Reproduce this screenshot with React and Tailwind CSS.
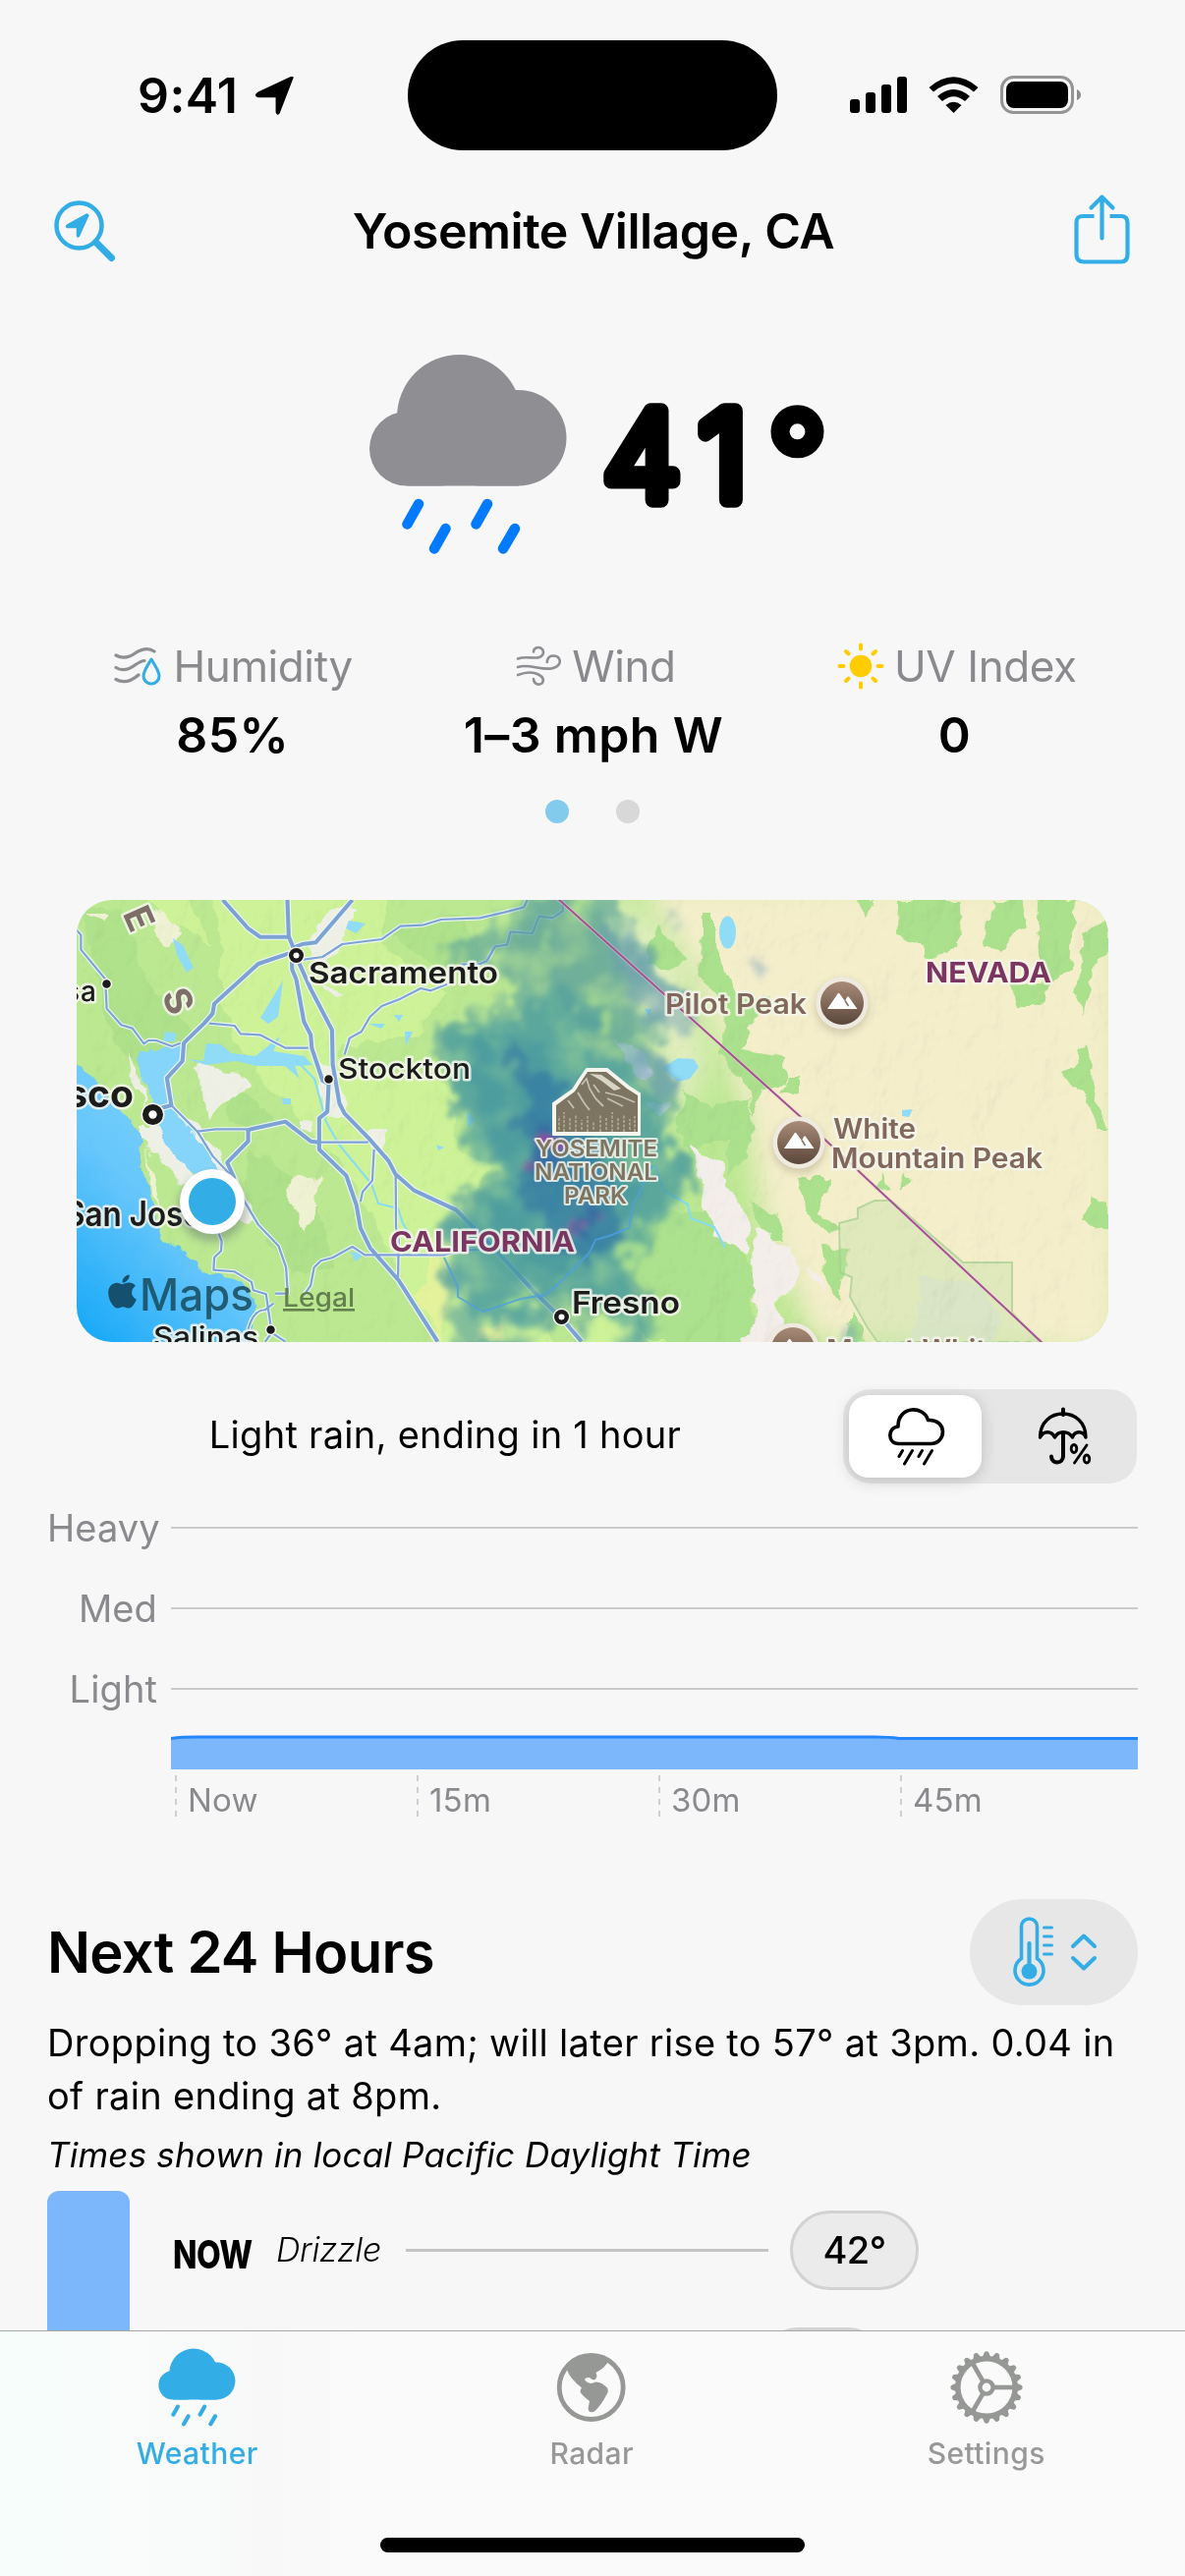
import React from "react";
import { FaApple } from "react-icons/fa";

const BLUE = "#32ade6";

/* ---------- Status bar ---------- */

function StatusBar() {
  return (
    <div className="h-[168px] pt-[41px] flex items-start shrink-0">
      <div className="w-[415px] h-[112px] flex items-center pl-[140px]">
        <span className="text-[50px] leading-[60px] font-semibold tracking-[0.4px]">9:41</span>
        <svg className="ml-[17px] mt-[1px]" width="42" height="40" viewBox="0 0 42 40">
          <path d="M38.5 2 L25 37 Q23.6 39.5 22.3 36 V20.5 H4 Q-.5 19.5 3.5 16.5 L36 1.2 Q40 -.5 38.5 2Z" fill="#000" stroke="#000" strokeWidth="1.5" strokeLinejoin="round" />
        </svg>
      </div>
      <div className="w-[376px] h-[112px] rounded-full bg-black" />
      <div className="h-[112px] pl-[74px] flex items-center">
        <svg width="236" height="40" viewBox="865 78 236 40">
          <rect x="865" y="102" width="10" height="14" rx="3" />
          <rect x="881" y="95" width="10" height="21" rx="3" />
          <rect x="897" y="87" width="10" height="29" rx="3" />
          <rect x="913" y="79" width="10" height="37" rx="3" />
          <path d="M945.5 90 L950 94.5 Q970.5 77.5 991 94.5 L995.5 90 Q970.5 68.500 945.500 90Z" />
          <path d="M954 99 L959 104 Q970.500 94.500 982 104 L987 99 Q970.500 85 954 99Z" />
          <path d="M962.500 108 L970.500 116 L978.500 108 Q970.500 101.500 962.500 108Z" />
          <rect x="1019.500" y="79.500" width="72" height="36" rx="12" fill="none" stroke="#959595" strokeWidth="3" />
          <rect x="1024" y="84" width="63" height="27" rx="8" />
          <path d="M1096 92 Q1100 94 1100 97.500 Q1100 101 1096 103Z" fill="#8b8b8b" />
        </svg>
      </div>
    </div>
  );
}

function TitleBar() {
  return (
    <div className="h-[130px] px-[54px] flex justify-between shrink-0">
      <svg className="mt-[35px]" width="65" height="66" viewBox="0 0 65 66" fill="none" stroke={BLUE}>
        <circle cx="26.500" cy="26.500" r="23" strokeWidth="4.500" />
        <path d="M43.500 43.500 L59.500 59.500" strokeWidth="7" strokeLinecap="round" />
        <path d="M36 16 L26.500 37 Q25 39 24.500 37 V28.500 H14.500 Q12.500 27.500 14.500 26 L34.500 15Z" fill={BLUE} strokeWidth="1.500" strokeLinejoin="round" />
      </svg>
      <h1 className="mt-[37px] -ml-[3px] text-[50px] leading-[60px] font-semibold tracking-[-0.5px] whitespace-nowrap">Yosemite Village, CA</h1>
      <svg className="mt-[29px]" width="60" height="74" viewBox="0 0 60 74" fill="none" stroke={BLUE} strokeWidth="4.200">
        <path d="M21.500 23 H10 Q3.500 23 3.500 29.500 V62 Q3.500 69.500 11 69.500 H49 Q55.500 69.500 55.500 62 V30 Q55.500 23 49 23 H37.500" />
        <path d="M29.500 45.500 V4 M18.500 14.500 L29.500 3.500 L40.500 14.500" strokeLinecap="round" strokeLinejoin="round" />
      </svg>
    </div>
  );
}

/* ---------- Current conditions ---------- */

function RainCloud({ width, height, cloud, rain }) {
  return (
    <svg width={width} height={height} viewBox="375 360 203 205">
      <g fill={cloud}>
        <circle cx="467.500" cy="424.500" r="63.500" />
        <rect x="376" y="419" width="110" height="75.500" rx="37.700" />
        <rect x="440" y="397" width="136.500" height="97.500" rx="48.700" />
        <rect x="414" y="450" width="114" height="44.500" />
      </g>
      <path d="M426 513 L414.500 533.500 M453.500 538 L442 558.500 M496 513 L484.500 533.500 M524 538 L512 558.500" stroke={rain} strokeWidth="10.500" strokeLinecap="round" />
    </svg>
  );
}

function Current() {
  return (
    <div className="h-[352px] pt-[62px] pl-[375px] flex items-start shrink-0">
      <RainCloud width={203} height={205} cloud="#8e8e93" rain="#007aff" />
      <svg className="ml-[28px] mt-[40px]" width="250" height="130" viewBox="606 400 250 130">
        <g stroke="#000" strokeLinejoin="round" fontFamily="Inter, sans-serif">
          <text x="614 711" y="508.500" fontSize="125" fontWeight="300" strokeWidth="15.500">41</text>
          <text x="781" y="516" fontSize="134" fontWeight="300" strokeWidth="11.500">°</text>
        </g>
      </svg>
    </div>
  );
}

function HumidityIcon() {
  return (
    <svg width="48" height="40" viewBox="0 0 48 40" fill="none" stroke="#8e8e93" strokeWidth="3.200" strokeLinecap="round">
      <path d="M2 9 C9 13 16 11 22 6.500 C30 1.500 36 1.500 41 5" />
      <path d="M2 21.500 C9 26 16 23 22 18.500 C25 16.500 28 14.500 31 14.500" />
      <path d="M2 33.500 C10 38 18 35 25 29" />
      <path d="M38 13 C34 20 30 25 30 30 A8 8 0 0 0 46 30 C46 25 42 20 38 13Z" stroke={BLUE} strokeWidth="3" strokeLinejoin="round" />
    </svg>
  );
}

function WindIcon() {
  return (
    <svg width="47" height="42" viewBox="0 0 47 42" fill="none" stroke="#8e8e93" strokeWidth="2.600" strokeLinecap="round">
      <path d="M2 13.500 C8 11 15 13 22 12.500 C28 11.500 29 7 27 4 C24 .500 18 2 18 6.500" />
      <path d="M2 22 C12 18 24 25 36 23.500 C44 22 46 17 44 13.500 C42 9.500 34 9.500 32.500 14 C32 15 31.800 16 31.800 17" />
      <path d="M2 30 C10 27 18 27 23 29.500 C28 32 29 36 26.500 38.500 C23 41 18 39 18 34" />
    </svg>
  );
}

function SunIcon() {
  return (
    <svg width="48" height="48" viewBox="0 0 48 48">
      <circle cx="24" cy="24" r="11.300" fill="#ffcc00" />
      <g stroke="#ffcc00" strokeWidth="4" strokeLinecap="round">
        <path d="M24 2.500 V6.500 M24 41.500 V45.500 M2.500 24 H6.500 M41.500 24 H45.500 M9 9 L11.500 11.500 M36.500 36.500 L39 39 M9 39 L11.500 36.500 M36.500 11.500 L39 9" />
      </g>
    </svg>
  );
}

const METRICS = [
  { label: "Humidity", value: "85%", Icon: HumidityIcon, gap: "gap-[13px] pl-[1px]" },
  { label: "Wind", value: "1–3 mph W", Icon: WindIcon, gap: "gap-[10px] pl-[5px]" },
  { label: "UV Index", value: "0", Icon: SunIcon, gap: "gap-[10px] pl-[5px]" },
];

function Metrics() {
  return (
    <div className="h-[266px] shrink-0 flex flex-col">
      <div className="grid grid-cols-3 pl-[53px] pr-[51px]">
        {METRICS.map(({ label, value, Icon, gap }) => (
          <div key={label} className="flex flex-col items-center">
            <div className={`h-[56px] flex items-center ${gap} text-[44px] text-[#8a8a8e] tracking-[-0.4px] whitespace-nowrap`}>
              <Icon />
              <span>{label}</span>
            </div>
            <div className="mt-[12px] text-[50px] leading-[60px] font-semibold tracking-[0.4px] whitespace-nowrap">{value}</div>
          </div>
        ))}
      </div>
      <div className="mt-[36px] flex justify-center gap-[48px]">
        <span className="size-[24px] rounded-full bg-[#83cbec]" />
        <span className="size-[24px] rounded-full bg-[#d8d8d8]" />
      </div>
    </div>
  );
}

/* ---------- Map ---------- */

function Label({ x, y, w, size, weight = 600, fill = "#1b1b1b", halo = 5, anchor, transform, children }) {
  return (
    <text
      x={x} y={y} textLength={w} lengthAdjust="spacingAndGlyphs" fontSize={size} fontWeight={weight}
      fill={fill} stroke="#f4f5ec" strokeOpacity="0.85" strokeWidth={halo} strokeLinejoin="round"
      paintOrder="stroke" textAnchor={anchor} transform={transform} fontFamily="Inter, sans-serif"
    >
      {children}
    </text>
  );
}

function Peak({ x, y }) {
  return (
    <g transform={`translate(${x} ${y})`}>
      <circle cy="4" r="27" fill="#6b5a48" opacity="0.25" filter="url(#soft)" />
      <circle r="26.500" fill="#eeeae0" />
      <circle r="22" fill="url(#peak)" />
      <path d="M-15 6 L-4.500 -9.500 Q-3.500 -11 -2.500 -9.500 L3 -2 L5 -6 Q6 -7.500 7 -6 L15.500 6Z" fill="#fff" />
      <path d="M3 -2.500 L6.500 3" stroke="#8a7061" strokeWidth="1.600" />
    </g>
  );
}

const MAJOR_ROADS = [
  "M455 48 L530 135 L565 161 L652 161",
  "M646 48 L650 160 L668 205",
  "M838 48 L730 178 L690 183 L660 195",
  "M668 205 L560 243 L430 365 L425 395 L400 425 L340 485 L336 540 L290 592 L303 675 L250 690",
  "M658 215 L660 260 L672 290 L695 420 L715 460 L718 500 L750 600 L768 610 L764 695 L740 715 V810 L820 890 L850 980 L862 1050 L890 1110 L975 1210 L1090 1397",
  "M678 235 L715 320 L778 445 L780 550 L800 670 L815 700 L890 780 L945 845 L965 885 L1020 935 L1145 995 L1260 1115 L1380 1250 L1460 1330 L1515 1397",
  "M530 750 L640 725 L715 785 L740 788",
  "M530 750 V785 L468 850 L490 900",
];

const MINOR_ROADS = [
  "M23 140 L36 155 V200 L108 290 L112 380 L155 430 L188 440 L222 487 L235 477 L258 477 L305 495 L330 485",
  "M415 425 L490 432 L508 457 L565 460 L640 500 L708 500",
  "M680 232 L750 222 L808 183 L925 168 L980 128 L1045 125 L1100 108 L1215 103 L1290 85 L1345 70 L1355 48",
  "M1460 48 V82 L1430 103 L1390 98 L1370 150 L1305 145 L1295 185 L1260 190 L1235 235 L1210 245 L1160 245",
  "M1130 300 L1070 325 L1040 318 L980 350 L925 372 L890 405 L865 450 L830 470 L815 520",
  "M303 675 L380 755 L435 748 H530",
  "M380 755 L425 830 L480 890 L520 970 L560 1040 L620 1105 L642 1170 L647 1250 L610 1250",
  "M740 788 H885 M902 810 L897 905 L868 940 L862 970",
  "M966 890 L967 1050 L975 1080 L973 1200",
  "M440 1060 L452 1090 L450 1120 L430 1140 L428 1178 L490 1183 L540 1215 L545 1240 L583 1252 L597 1350",
  "M695 1255 L715 1225 L725 1170 L745 1150 L780 1140 L838 1107 L875 1132 H1110 L1160 1118 L1260 1115",
  "M530 1360 Q545 1300 580 1300 L605 1280 M600 1370 L580 1397 M600 1370 L640 1397",
];

function MapArt() {
  return (
    <svg className="block" width="1050" height="450" viewBox="78 916 1050 450">
      <defs>
        <linearGradient id="ocean" x1="0.8" y1="0" x2="0.1" y2="1">
          <stop offset="0" stopColor="#86d6fb" />
          <stop offset="0.500" stopColor="#66c6fb" />
          <stop offset="1" stopColor="#10a6f7" />
        </linearGradient>
        <linearGradient id="peak" x1="0" y1="0" x2="0" y2="1">
          <stop offset="0" stopColor="#a98c78" />
          <stop offset="1" stopColor="#5a463b" />
        </linearGradient>
        <filter id="soft" x="-50%" y="-50%" width="200%" height="200%"><feGaussianBlur stdDeviation="4" /></filter>
        <filter id="land" x="-10%" y="-10%" width="120%" height="120%"><feGaussianBlur stdDeviation="14" /></filter>
        <filter id="rough" x="-10%" y="-10%" width="120%" height="120%">
          <feTurbulence type="fractalNoise" baseFrequency="0.045" numOctaves="3" seed="4" result="n" />
          <feDisplacementMap in="SourceGraphic" in2="n" scale="16" xChannelSelector="R" yChannelSelector="G" />
        </filter>
        <filter id="rain" x="-20%" y="-20%" width="140%" height="140%">
          <feTurbulence type="fractalNoise" baseFrequency="0.045" numOctaves="4" seed="9" result="n" />
          <feDisplacementMap in="SourceGraphic" in2="n" scale="44" xChannelSelector="R" yChannelSelector="G" />
          <feGaussianBlur stdDeviation="3" />
        </filter>
        <filter id="drizzle" x="-20%" y="-20%" width="140%" height="140%">
          <feTurbulence type="fractalNoise" baseFrequency="0.045" numOctaves="4" seed="9" result="n" />
          <feDisplacementMap in="SourceGraphic" in2="n" scale="44" xChannelSelector="R" yChannelSelector="G" result="d" />
          <feTurbulence type="fractalNoise" baseFrequency="0.030" numOctaves="3" seed="33" result="m" />
          <feColorMatrix in="m" values="0 0 0 0 0  0 0 0 0 0  0 0 0 0 0  3.2 0 0 0 -0.8" result="a" />
          <feComposite in="d" in2="a" operator="in" />
          <feGaussianBlur stdDeviation="2.800" />
        </filter>
        <filter id="relief" x="0" y="0" width="100%" height="100%">
          <feTurbulence type="fractalNoise" baseFrequency="0.030 0.022" numOctaves="4" seed="21" result="n" />
          <feDiffuseLighting in="n" surfaceScale="5" diffuseConstant="1.220" lightingColor="#fff"><feDistantLight azimuth="225" elevation="55" /></feDiffuseLighting>
        </filter>
      </defs>

      {/* land */}
      <rect x="78" y="916" width="1050" height="450" fill="#bce892" />
      <path d="M650 900 L700 980 L730 1050 L760 1140 L775 1240 L830 1366 L1140 1380 V900Z" fill="#f4eecb" filter="url(#land)" />
      <path d="M610 900 L690 960 L720 1080 L700 1150 L640 1000Z" fill="#e2eec0" filter="url(#land)" />
      <g fill="#cdf297" filter="url(#rough)">
        <path d="M215 905 L400 905 L385 960 L455 1010 L430 1050 L350 1065 L345 1090 L460 1105 L465 1165 L500 1190 L475 1215 L470 1260 L560 1340 L560 1366 L440 1366 L380 1240 L350 1190 L300 1130 L260 1090 L240 1060 L225 1020 L225 960Z" />
        <path d="M140 905 L185 905 L215 960 L180 945 L160 925Z" />
        <path d="M590 1350 L640 1320 L680 1366 L590 1380Z" />
      </g>
      <g fill="#a8de88" opacity="0.6" filter="url(#rough)">
        <path d="M80 920 L125 925 L150 1000 L200 1050 L170 1100 L120 1070 L100 1010Z" />
        <path d="M255 1170 L320 1210 L340 1290 L300 1300 L250 1230Z" />
        <path d="M400 950 L470 930 L500 1000 L450 990Z" />
        <path d="M215 1090 L270 1130 L280 1150 L235 1140Z" />
      </g>
      <g fill="#abe08d" filter="url(#rough)">
        <path d="M715 925 L727 925 V965 L740 990 L750 1010 L790 1018 L760 1045 L755 1070 L800 1078 L798 1100 L775 1110 L765 1135 L758 1100 L732 1075 L738 1030 L712 997Z" />
        <path d="M670 942 L692 965 L700 980 L680 990 L656 977Z" />
        <path d="M695 1110 L725 1130 L760 1118 L768 1160 L755 1185 L740 1200 L745 1160 L720 1160 L705 1180 L690 1150Z" />
        <path d="M870 916 H890 L882 935Z M915 916 H980 L975 965 L945 975 L914 950Z M1010 916 H1038 L1045 942 L1015 970 L1000 965Z M1058 916 H1094 L1090 985 L1060 1010 L1055 940Z M1128 930 L1105 955 L1095 1010 L1103 1035 L1112 985 L1128 975Z M1030 1000 H1065 L1060 1025 H1035Z" />
        <path d="M1105 1065 L1082 1095 L1105 1115 L1118 1150 H1127 L1115 1110Z M1112 1218 L1100 1240 L1115 1255 L1130 1248 V1225Z" />
        <path d="M815 1200 H845 L835 1235 L855 1250 L840 1257 L818 1230Z M835 1268 L865 1270 L860 1300 L855 1325 L840 1300Z M800 1095 L815 1095 L815 1115 L795 1112Z M895 1198 L905 1210 L893 1212Z M922 1195 L930 1200 L915 1215Z M870 1335 L880 1366 H860Z" />
        <path d="M648 1250 L700 1230 L740 1240 L770 1300 L760 1366 L660 1366 L630 1300Z" opacity="0.9" />
        <path d="M765 1225 L790 1235 L798 1262 L775 1262Z" />
      </g>
      <g fill="#e4f29b" filter="url(#rough)">
        <path d="M435 1280 L465 1285 L450 1366 L425 1320Z M485 1350 L515 1345 L510 1366 H480Z" />
      </g>
      <g fill="#eff1d3" filter="url(#rough)">
        <path d="M150 935 L165 925 L185 955 L172 960Z M88 930 H110 L105 942Z M300 1200 L325 1195 L322 1230 L310 1255 L292 1220Z M150 1170 L165 1230 L155 1215Z" />
      </g>
      <g fill="#eef0e6" filter="url(#rough)">
        <path d="M315 960 L335 925 L365 925 L340 970 L325 985Z" />
        <path d="M195 1085 L245 1090 L260 1110 L225 1120 L210 1140 L205 1100Z" />
        <path d="M130 1070 L145 1100 L150 1125 L135 1100Z M175 1130 L200 1145 L235 1190 L262 1240 L248 1245 L205 1170Z M145 1145 L165 1150 L200 1200 L185 1205 L150 1170Z" />
        <path d="M325 1080 L338 1085 L352 1135 H330Z M375 1150 H392 V1175 L375 1165Z M305 1138 L320 1140 L318 1155 L305 1150Z M315 1000 L350 1010 L340 1015Z" />
      </g>
      <g fill="#f3eeea" filter="url(#rough)">
        <path d="M705 1170 L735 1185 L738 1205 L760 1235 L762 1275 L740 1270 L720 1240Z" />
        <path d="M768 1250 L800 1270 L812 1300 L790 1330 L805 1366 H755 L770 1330 L765 1300Z" />
        <path d="M628 1060 L652 1068 L665 1095 L655 1098 L635 1080Z M658 1120 L680 1125 L672 1135Z M820 1285 L835 1300 L838 1315 L828 1305Z" />
      </g>
      <path d="M940 1300 L1000 1310 L1020 1345 L1010 1366 H925 L935 1330Z" fill="#e8e8de" opacity="0.8" filter="url(#rough)" />
      <path d="M854 1245 L873 1240 V1230 L890 1222 H907 L980 1285 H1030 V1336 L1058 1366 H893 L882 1350 L865 1320 L867 1300 L855 1295Z" fill="#b9dfa0" fillOpacity="0.35" stroke="#a3cf8f" strokeWidth="2" strokeOpacity="0.7" />
      <rect x="78" y="916" width="1050" height="450" filter="url(#relief)" opacity="0.15" style={{ mixBlendMode: "multiply" }} />

      {/* water */}
      <g filter="url(#rough)">
        <path d="M66 1080 L95 1095 L120 1130 L146 1150 L143 1190 L152 1205 L160 1250 L185 1275 L215 1298 L240 1305 L256 1315 L260 1335 L250 1375 H60Z" fill="url(#ocean)" />
        <path d="M145 1070 L185 1062 L182 1085 L172 1097 L175 1125 L195 1150 L220 1185 L232 1205 L200 1195 L170 1170 L158 1150 L155 1120 L145 1095Z" fill="#85d5fb" />
        <path d="M145 1145 V1160 L159 1168 L160 1145Z" fill="#eef0e6" />
      </g>
      <g fill="#90dcf7">
        <path d="M176 955 L186 962 L197 985 L190 990 L180 972Z M288 998 L283 1035 L273 1042 L265 1036Z M355 937 L372 940 L362 950 L352 945Z M168 1050 L180 1052 L178 1060 L166 1060Z" />
        <path d="M190 1078 L207 1080 L210 1062 L225 1063 L235 1072 L260 1075 L285 1055 L278 1070 L310 1075 L318 1084 L300 1085 L305 1098 L290 1085 L262 1085 L240 1080 L210 1084Z" />
        <path d="M401 1033 L410 1033 L406 1040Z M375 1042 L392 1042 L388 1047Z M412 1050 L420 1050 L413 1065Z M287 1118 H296 V1124 H288Z M444 1165 L452 1168 L446 1171Z M356 1274 L372 1276 L362 1284Z M475 1130 L483 1140 L476 1148Z" />
        <ellipse cx="740.500" cy="949" rx="8.500" ry="16.500" />
        <path d="M674 1087 L690 1077 L706 1078 L711 1086 L702 1098 L690 1101Z M918 1130 L929 1129 L925 1137 L918 1136Z M656 1027 L663 1027 L661 1035Z" />
      </g>
      <g fill="none" stroke="#86dbf8" strokeWidth="2">
        <path d="M300 1078 L320 1098 L332 1142 L345 1165 L378 1205 L385 1225 L405 1230 L410 1245 L420 1262" />
        <path d="M666 1186 L676 1212 L700 1226 L703 1240 L727 1249 L738 1270" />
      </g>

      {/* roads, drawn in their own grid */}
      <g transform="translate(70 900) scale(0.3444 0.3333)" fill="none" strokeLinejoin="round">
        {MINOR_ROADS.map((d) => <path key={d} d={d} stroke="#eef6f4" strokeWidth="13" />)}
        {MAJOR_ROADS.map((d) => <path key={d} d={d} stroke="#eef6f4" strokeWidth="19" />)}
        {MINOR_ROADS.map((d) => <path key={d} d={d} stroke="#7da3d4" strokeWidth="6.500" />)}
        {MAJOR_ROADS.map((d) => <path key={d} d={d} stroke="#7da3d4" strokeWidth="12" />)}
      </g>

      {/* precipitation */}
      <g filter="url(#drizzle)">
        <path d="M445 973 L488 943 L530 925 L580 900 L630 915 L675 985 L695 1015 L672 1055 L658 1075 L680 1100 L700 1120 L682 1135 L682 1165 L708 1195 L698 1245 L665 1258 L650 1290 L662 1315 L675 1385 L640 1385 L630 1345 L600 1365 L572 1345 L542 1385 L455 1385 L452 1295 L450 1255 L460 1222 L490 1205 L508 1185 L475 1175 L465 1135 L462 1110 L440 1072 L440 1045 L462 1035 L510 1020 L530 1010 L520 990 L490 985Z" fill="#57a09c" opacity="0.62" />
      </g>
      <g filter="url(#rain)">
        <path d="M450 1045 L500 1042 L540 1022 L580 1000 L610 1030 L590 1065 L640 1085 L655 1110 L675 1150 L700 1195 L690 1235 L655 1250 L635 1290 L660 1370 L630 1340 L590 1320 L560 1330 L530 1350 L480 1340 L460 1300 L460 1245 L475 1220 L520 1195 L480 1180 L470 1130 L455 1080Z" fill="#3d95a2" opacity="0.52" />
        <path d="M540 925 L580 915 L620 950 L660 1000 L640 1060 L600 1050 L560 1010 L500 990Z" fill="#5c9e9c" opacity="0.38" />
        <path d="M475 1065 L540 1050 L600 1110 L640 1180 L650 1230 L600 1290 L540 1290 L480 1260 L525 1200 L490 1150Z" fill="#2f83a2" opacity="0.3" />
        <path d="M520 1065 L545 1090 L575 1095 L580 1130 L610 1165 L625 1230 L640 1260 L605 1290 L565 1280 L555 1240 L520 1215 L545 1180 L530 1150 L540 1110 L515 1090Z" fill="#2566a8" opacity="0.45" />
        <path d="M545 1140 L565 1150 L560 1200 L535 1205 L550 1170Z M580 1230 L600 1230 L605 1260 L590 1255Z" fill="#3a4fa5" opacity="0.45" />
        <path d="M553 1158 L572 1155 L570 1165 L555 1167Z M537 1186 L547 1186 L542 1194 L534 1191Z M578 1240 L588 1240 L584 1247Z M600 1236 L611 1238 L604 1244Z M564 1134 L570 1136 L566 1142Z" fill="#9a3f9c" />
        <g fill="#5f91b8" opacity="0.4">
          <path d="M610 950 L645 945 L655 980 L680 1000 L710 1030 L700 1060 L670 1045 L640 1010Z M685 930 L695 940 L690 950Z M760 972 L785 982 L780 995Z M640 1070 L665 1075 L690 1110 L670 1135 L655 1115Z M850 1360 L870 1352 L890 1375 H850Z" />
        </g>
      </g>
      <g fill="#b6e98c" opacity="0.75" filter="url(#rain)">
        <path d="M460 1050 H485 L480 1060 H462Z M630 1265 L650 1260 L648 1300 L640 1290Z M510 1318 L545 1316 L530 1330Z M605 1030 L625 1036 L612 1048Z M655 1095 L662 1110 L652 1115Z M545 955 L565 950 L560 965Z M590 1015 L605 1010 L600 1025Z M640 1240 L655 1245 L648 1255Z" />
      </g>
      <path d="M452 1280 L466 1310 V1320 L492 1335 L530 1322 L555 1318 L570 1305 L600 1275 L606 1262 L620 1258 L640 1250 L645 1225 L664 1186" fill="none" stroke="#4f9fe0" strokeWidth="2" opacity="0.8" />

      {/* state line */}
      <path d="M567 914 L815 1137 L1062 1368" fill="none" stroke="#f0d9e4" strokeWidth="4" opacity="0.4" />
      <path d="M567 914 L815 1137 L1062 1368" fill="none" stroke="#a5538f" strokeWidth="2" />

      {/* towns */}
      {[[301.5, 972.5, 7.5, 3], [155.5, 1134.5, 10.5, 4.2], [571.5, 1340.5, 7.5, 3]].map(([x, y, r, c]) => (
        <g key={x}>
          <circle cx={x} cy={y} r={r + 1.5} fill="#f4f5ec" />
          <circle cx={x} cy={y} r={r} fill="#1b1b1b" />
          <circle cx={x} cy={y} r={c} fill="#fff" />
        </g>
      ))}
      {[[108.5, 1001.5], [334.5, 1098.5], [275.5, 1353.5]].map(([x, y]) => (
        <circle key={x} cx={x} cy={y} r="5" fill="#1b1b1b" stroke="#f4f5ec" strokeWidth="1.500" />
      ))}

      <Label x={0} y={13} size={38} weight={700} fill="#7d6f68" anchor="middle" transform="translate(141 935) rotate(66)">E</Label>
      <Label x={0} y={13} size={38} weight={700} fill="#7d6f68" anchor="middle" transform="translate(181 1019) rotate(68)">S</Label>
      <Label x="66 82" y={1019} size={28} weight={500}>sa</Label>
      <Label x={314} y={1001} w={193} size={30}>Sacramento</Label>
      <Label x={344} y={1098} w={135} size={29} weight={500}>Stockton</Label>
      <Label x={136} y={1127} size={39} weight={700} anchor="end">sco</Label>
      <Label x={66} y={1248} w={139} size={35}>San Jose</Label>
      <Label x={156} y={1371} w={107} size={29} weight={500}>Salinas</Label>
      <Label x={582} y={1337} w={110} size={31}>Fresno</Label>
      <Label x={397} y={1274} w={188} size={29} weight={700} fill="#7b3561">CALIFORNIA</Label>
      <Label x={942} y={1000} w={128} size={29} weight={700} fill="#7b3561">NEVADA</Label>
      <Label x={677} y={1032} w={144} size={28} fill="#80695c">Pilot Peak</Label>
      <Label x={848} y={1159} w={84} size={28} fill="#80695c">White</Label>
      <Label x={846} y={1189} w={215} size={28} fill="#80695c">Mountain Peak</Label>
      <Label x={841} y={1384} w={214} size={28} fill="#80695c">Mount Whitney</Label>
      <Peak x={857} y={1021} />
      <Peak x={813} y={1163} />
      <Peak x={807} y={1373} />

      {/* park emblem */}
      <path d="M563 1155 V1123 L583 1109 L590 1098 L597 1088 H618 L640 1106 L651 1113 V1155Z" fill="#f4f5ec" stroke="#f4f5ec" strokeWidth="2" strokeLinejoin="round" />
      <path d="M566 1152 V1125 L585 1111 L592 1100 L598 1091 H617 L638 1108 L649 1115 V1152Z" fill="#7d7562" />
      <path d="M600 1093 L612 1094 L632 1108 L625 1110 L612 1100Z" fill="#d9d5c6" />
      <path d="M592 1104 L597 1098 L600 1108 L606 1118 L614 1126 M588 1112 L594 1122 L600 1130 M578 1120 L584 1128 M616 1112 L632 1116 L646 1122 M618 1118 L634 1126 M604 1104 L610 1112" fill="none" stroke="#c4bfae" strokeWidth="1.800" />
      <path d="M569 1150 V1136 M574 1152 V1132 M580 1150 V1138 M586 1152 V1134 M592 1150 V1140 M598 1152 V1136 M604 1150 V1142 M611 1152 V1134 M617 1150 V1138 M623 1152 V1132 M629 1150 V1138 M635 1152 V1134 M641 1150 V1139 M646 1152 V1136" stroke="#b3ad9b" strokeWidth="1.500" strokeDasharray="3 1.500" />
      <Label x={545} y={1177} w={124} size={23} fill="#7d7562" halo={4}>YOSEMITE</Label>
      <Label x={544} y={1201} w={125} size={23} fill="#7d7562" halo={4}>NATIONAL</Label>
      <Label x={574} y={1225} w={64} size={23} fill="#7d7562" halo={4}>PARK</Label>

      {/* location */}
      <circle cx="216" cy="1229" r="35" fill="#456" opacity="0.35" filter="url(#soft)" />
      <circle cx="216" cy="1223" r="33" fill="#fff" />
      <circle cx="216" cy="1223" r="24" fill={BLUE} />

      {/* attribution */}
      <FaApple x="105" y="1295" size={39} color="#16506f" />
      <text x="142" y="1334" textLength="116" lengthAdjust="spacingAndGlyphs" fontSize="45" fontWeight="500" fill="#174a5c" fillOpacity="0.85" fontFamily="Inter, sans-serif">Maps</text>
      <text x="288" y="1330" textLength="73" lengthAdjust="spacingAndGlyphs" fontSize="26" fontWeight="500" fill="#64804f" textDecoration="underline" fontFamily="Inter, sans-serif">Legal</text>
    </svg>
  );
}

/* ---------- Next-hour precipitation ---------- */

function ModeSwitch() {
  return (
    <div className="w-[299px] h-[96px] rounded-[28px] bg-[#e6e6e6] p-[6px] flex shrink-0">
      <div className="w-[135px] h-[84px] rounded-[20px] bg-white shadow-[0_3px_16px_rgba(0,0,0,0.18)] flex items-center justify-center">
        <svg width="60" height="60" viewBox="902 1432 60 60" fill="none" stroke="#000" strokeLinecap="round" strokeLinejoin="round">
          <path d="M914.500 1469.500 C903 1469 903 1453 914 1452 C913.500 1431 940 1430 944.500 1445.500 C964 1444 964 1469.500 947 1469.500Z" strokeWidth="3.600" />
          <path d="M918.500 1476.500 L915 1482.500 M928.500 1476.500 L920.500 1490 M938.500 1476.500 L935 1482.500 M948.500 1476.500 L940.500 1490" strokeWidth="3" />
        </svg>
      </div>
      <div className="flex-1 flex items-center justify-center pl-[18px]">
        <svg width="58" height="60" viewBox="1055 1432 58 60" fill="none" stroke="#000" strokeLinecap="round" strokeLinejoin="round">
          <path d="M1058.500 1463 C1058.500 1431 1105 1431 1105 1463 C1102 1456 1094 1456 1091.500 1463 C1087 1456 1077 1456 1073.500 1463 C1070 1456 1062 1456 1058.500 1463Z" strokeWidth="3.400" />
          <path d="M1082 1434.500 V1440 M1082 1459 V1482 C1082 1490.500 1070 1490.500 1070 1482.500" strokeWidth="4" />
          <ellipse cx="1093" cy="1474.500" rx="2.800" ry="4" strokeWidth="2.800" />
          <ellipse cx="1106" cy="1485" rx="2.800" ry="4" strokeWidth="2.800" />
          <path d="M1106 1471 L1093.500 1489" strokeWidth="2.800" />
        </svg>
      </div>
    </div>
  );
}

function HourChart() {
  return (
    <div className="pl-[48px] pr-[48px] flex flex-col shrink-0">
      <div className="h-[41px]" />
      {["Heavy", "Med", "Light"].map((level) => (
        <div key={level} className="h-[82px] flex items-start">
          <div className="w-[112px] h-[46px] -mt-[19px] text-right text-[38px] leading-[46px] tracking-[0.1px] text-[#8a8a8e]">{level}</div>
          <div className="ml-[14px] mt-[3px] flex-1 h-[2px] bg-[#cacaca]" />
        </div>
      ))}
      <svg className="ml-[126px] -mt-[32px] block" width="984" height="36" viewBox="174 1765 984 36">
        <path d="M174 1769 Q185 1767 200 1767 H890 Q905 1767 915 1769 H1158 V1801 H174Z" fill="#7cb7fc" />
        <path d="M174 1769.500 Q185 1768 200 1768 H890 Q905 1768 915 1769.500 H1158" fill="none" stroke="#2586fb" strokeWidth="3" />
      </svg>
      <div className="mt-[6px] ml-[130px] flex">
        {["Now", "15m", "30m", "45m"].map((t) => (
          <div key={t} className="w-[246px] shrink-0 h-[44px] flex items-start">
            <div className="w-[2px] h-[42px] bg-[repeating-linear-gradient(to_bottom,#cfcfcf_0_6px,transparent_6px_12px)]" />
            <span className="ml-[11px] mt-[5px] text-[33px] leading-[40px] tracking-[0.2px] text-[#8a8a8e]">{t}</span>
          </div>
        ))}
      </div>
    </div>
  );
}

/* ---------- Next 24 hours ---------- */

function ThermometerButton() {
  return (
    <div className="w-[171px] h-[108px] rounded-full bg-[#e7e7e7] flex items-center justify-center">
      <svg width="90" height="74" viewBox="1028 1950 90 74" fill="none" stroke={BLUE}>
        <path d="M1039.500 1993.500 V1961 A8 8 0 0 1 1055.500 1961 V1993.500 A14.500 14.500 0 1 1 1039.500 1993.500Z" strokeWidth="3.600" />
        <circle cx="1047.500" cy="2006.500" r="8" fill={BLUE} stroke="none" />
        <path d="M1047.500 1978 V2006" strokeWidth="4.200" strokeLinecap="round" />
        <path d="M1062.500 1962 H1070.500 M1062.500 1971 H1070.500 M1062.500 1980 H1070.500 M1062.500 1989 H1070.500" strokeWidth="3" strokeLinecap="round" />
        <path d="M1092 1981 L1103 1970.500 L1114 1981 M1092 1993 L1103 2003.500 L1114 1993" strokeWidth="4" strokeLinecap="round" strokeLinejoin="round" />
      </svg>
    </div>
  );
}

function NextDay() {
  return (
    <div className="mt-[82px] px-[48px] shrink-0 h-[439px] overflow-hidden">
      <div className="flex items-center justify-between h-[108px]">
        <h2 className="text-[58px] leading-[70px] font-semibold tracking-[-0.75px]">Next 24 Hours</h2>
        <ThermometerButton />
      </div>
      <p className="mt-[11px] text-[38px] leading-[54px] tracking-[0.32px]">
        Dropping to 36° at 4am; will later rise to 57° at 3pm. 0.04 in
        <br />
        of rain ending at 8pm.
      </p>
      <p className="mt-[11px] text-[35px] leading-[44px] h-[44px] italic tracking-[0.18px]">Times shown in local Pacific Daylight Time</p>
      <div className="mt-[15px] flex">
        <div className="w-[84px] h-[160px] rounded-t-[12px] bg-[#7cb7fc]" />
        <div className="flex flex-col w-[890px]">
          <div className="flex items-start mt-[20px] h-[81px]">
            <div className="ml-[44px] mt-[20px] w-[79px] h-[50px]">
              <span className="inline-block origin-left scale-x-[0.8] text-[40px] leading-[50px] font-extrabold tracking-[-0.5px]">NOW</span>
            </div>
            <span className="ml-[26px] mt-[18px] w-[132px] text-[34px] leading-[44px] italic font-light tracking-[-0.3px]">Drizzle</span>
            <div className="mt-[39px] w-[369px] h-[3px] bg-[#c4c4c4]" />
            <div className="ml-[22px] w-[131px] h-[81px] rounded-full border-[3px] border-[#d2d2d2] bg-[#ebebeb] flex items-center justify-center text-[38px] font-medium tracking-[-0.5px]">42°</div>
          </div>
          <div className="mt-[38px] ml-[640px] w-[131px] h-[81px] rounded-full border-[3px] border-[#d2d2d2] bg-[#ebebeb]" />
        </div>
      </div>
    </div>
  );
}

/* ---------- Tab bar ---------- */

function Globe() {
  return (
    <svg width="72" height="72" viewBox="566 2393 72 72">
      <circle cx="601.700" cy="2429" r="32.500" fill="none" stroke="#969895" strokeWidth="4.800" />
      <path d="M577 2411 Q588 2396 602 2395.500 Q612 2395.500 619.500 2402 Q616 2409 606.500 2414 Q609 2419 605 2421.500 Q601.500 2421 600 2419 Q594 2419 595.500 2422 Q600 2427 606 2423.500 Q612 2423 618 2429.500 Q620 2433 617 2437 Q612 2447 605 2453.500 Q600 2456 598.500 2451 L600 2443 Q592 2437 590.500 2433.500 Q590.500 2431 592 2429.500 Q580 2420 577 2411Z" fill="#969895" />
    </svg>
  );
}

function Gear() {
  const teeth = Array.from({ length: 20 }, (_, i) => i * 18);
  return (
    <svg width="76" height="76" viewBox="-38 -38 76 76" fill="none" stroke="#969895">
      {teeth.map((a) => (
        <path key={a} d="M30 -4.500 L36 -2 Q37.400 0 36 2 L30 4.500Z" transform={`rotate(${a})`} fill="#969895" stroke="none" />
      ))}
      <circle r="29.200" strokeWidth="5.600" />
      <circle r="6.600" strokeWidth="4.400" />
      {[0, 120, 240].map((a) => (
        <path key={a} d="M8 0 H28" strokeWidth="4.600" transform={`rotate(${a})`} />
      ))}
    </svg>
  );
}

function TabBar() {
  const tabs = [
    { name: "Weather", icon: <RainCloud width={79} height={80} cloud={BLUE} rain={BLUE} />, color: "text-[#32ade6]" },
    { name: "Radar", icon: <Globe />, color: "text-[#989898]" },
    { name: "Settings", icon: <Gear />, color: "text-[#989898]" },
  ];
  return (
    <div className="h-[251px] shrink-0 border-t-[1px] border-[#a9a9a9] bg-[linear-gradient(90deg,#f5fdfb_0,#f9fcfb_120px,#f8f8f8_270px,#fafafa_380px,#fafafa_1206px)] flex flex-col">
      <div className="grid grid-cols-3 pr-[1.5px]">
        {tabs.map((t) => (
          <div key={t.name} className={`flex flex-col items-center ${t.color}`}>
            <div className="mt-[16px] h-[81px] flex items-center justify-center">{t.icon}</div>
            <span className="mt-[9px] text-[30px] leading-[36px] font-medium tracking-[0.4px]">{t.name}</span>
          </div>
        ))}
      </div>
      <div className="mt-[68px] self-center w-[432px] h-[15px] rounded-full bg-black" />
    </div>
  );
}

export default function App() {
  return (
    <div className="w-[1206px] h-[2622px] overflow-hidden bg-[#f7f7f7] text-black font-['Inter',sans-serif] flex flex-col">
      <StatusBar />
      <TitleBar />
      <Current />
      <Metrics />
      <div className="mx-[78px] h-[450px] rounded-[36px] overflow-hidden shrink-0">
        <MapArt />
      </div>
      <div className="mt-[48px] pr-[49px] flex items-center shrink-0">
        <div className="flex-1 pl-[48px] text-center text-[38px] leading-[46px] tracking-[0.28px] pb-[5px]">Light rain, ending in 1 hour</div>
        <ModeSwitch />
      </div>
      <HourChart />
      <NextDay />
      <TabBar />
    </div>
  );
}
